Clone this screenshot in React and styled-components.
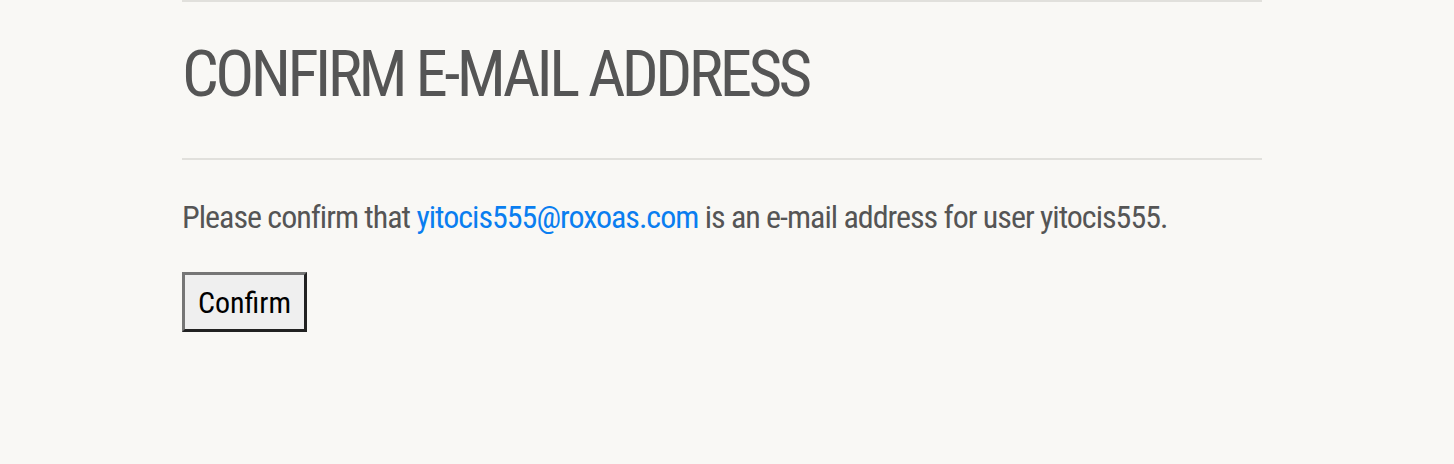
import React from 'react';
import styled, { createGlobalStyle } from 'styled-components';

const GlobalStyle = createGlobalStyle`
  html, body {
    margin: 0;
    background: #f9f8f5;
  }
  body {
    font-family: 'Roboto Condensed', 'Liberation Sans Narrow', sans-serif;
    color: #555;
  }
`;

const Page = styled.main`
  width: 1080px;
  margin-left: 182px;
`;

const Rule = styled.hr`
  margin: 0;
  border: none;
  height: 2px;
  background: #e1e0dc;
`;

const Title = styled.h1`
  margin: 0;
  padding: 35px 0 47px;
  font-size: 65px;
  line-height: 74px;
  font-weight: 400;
  letter-spacing: -3.6px;
  text-transform: uppercase;
  color: #555;
`;

const Message = styled.p`
  margin: 37px 0 0;
  font-size: 32px;
  line-height: 40px;
  font-weight: 400;
  letter-spacing: -1px;
  white-space: nowrap;
  color: #555;
`;

const EmailLink = styled.a`
  color: #0a7ef0;
  text-decoration: none;
`;

const ConfirmButton = styled.button`
  margin-top: 35px;
  padding: 0 13px;
  height: 60px;
  font-family: inherit;
  font-size: 30px;
  font-weight: 400;
  color: #000;
  background: #efefef;
  border: 3px solid;
  border-color: #767676 #222 #222 #767676;
  cursor: pointer;
`;

export default function App() {
  return (
    <>
      <GlobalStyle />
      <Page>
        <Rule />
        <Title>Confirm E-mail Address</Title>
        <Rule />
        <form onSubmit={e => e.preventDefault()}>
          <Message>
            Please confirm that <EmailLink href="mailto:yitocis555@roxoas.com">yitocis555@roxoas.com</EmailLink> is an e-mail address for user yitocis555.
          </Message>
          <ConfirmButton type="submit">Confirm</ConfirmButton>
        </form>
      </Page>
    </>
  );
}
